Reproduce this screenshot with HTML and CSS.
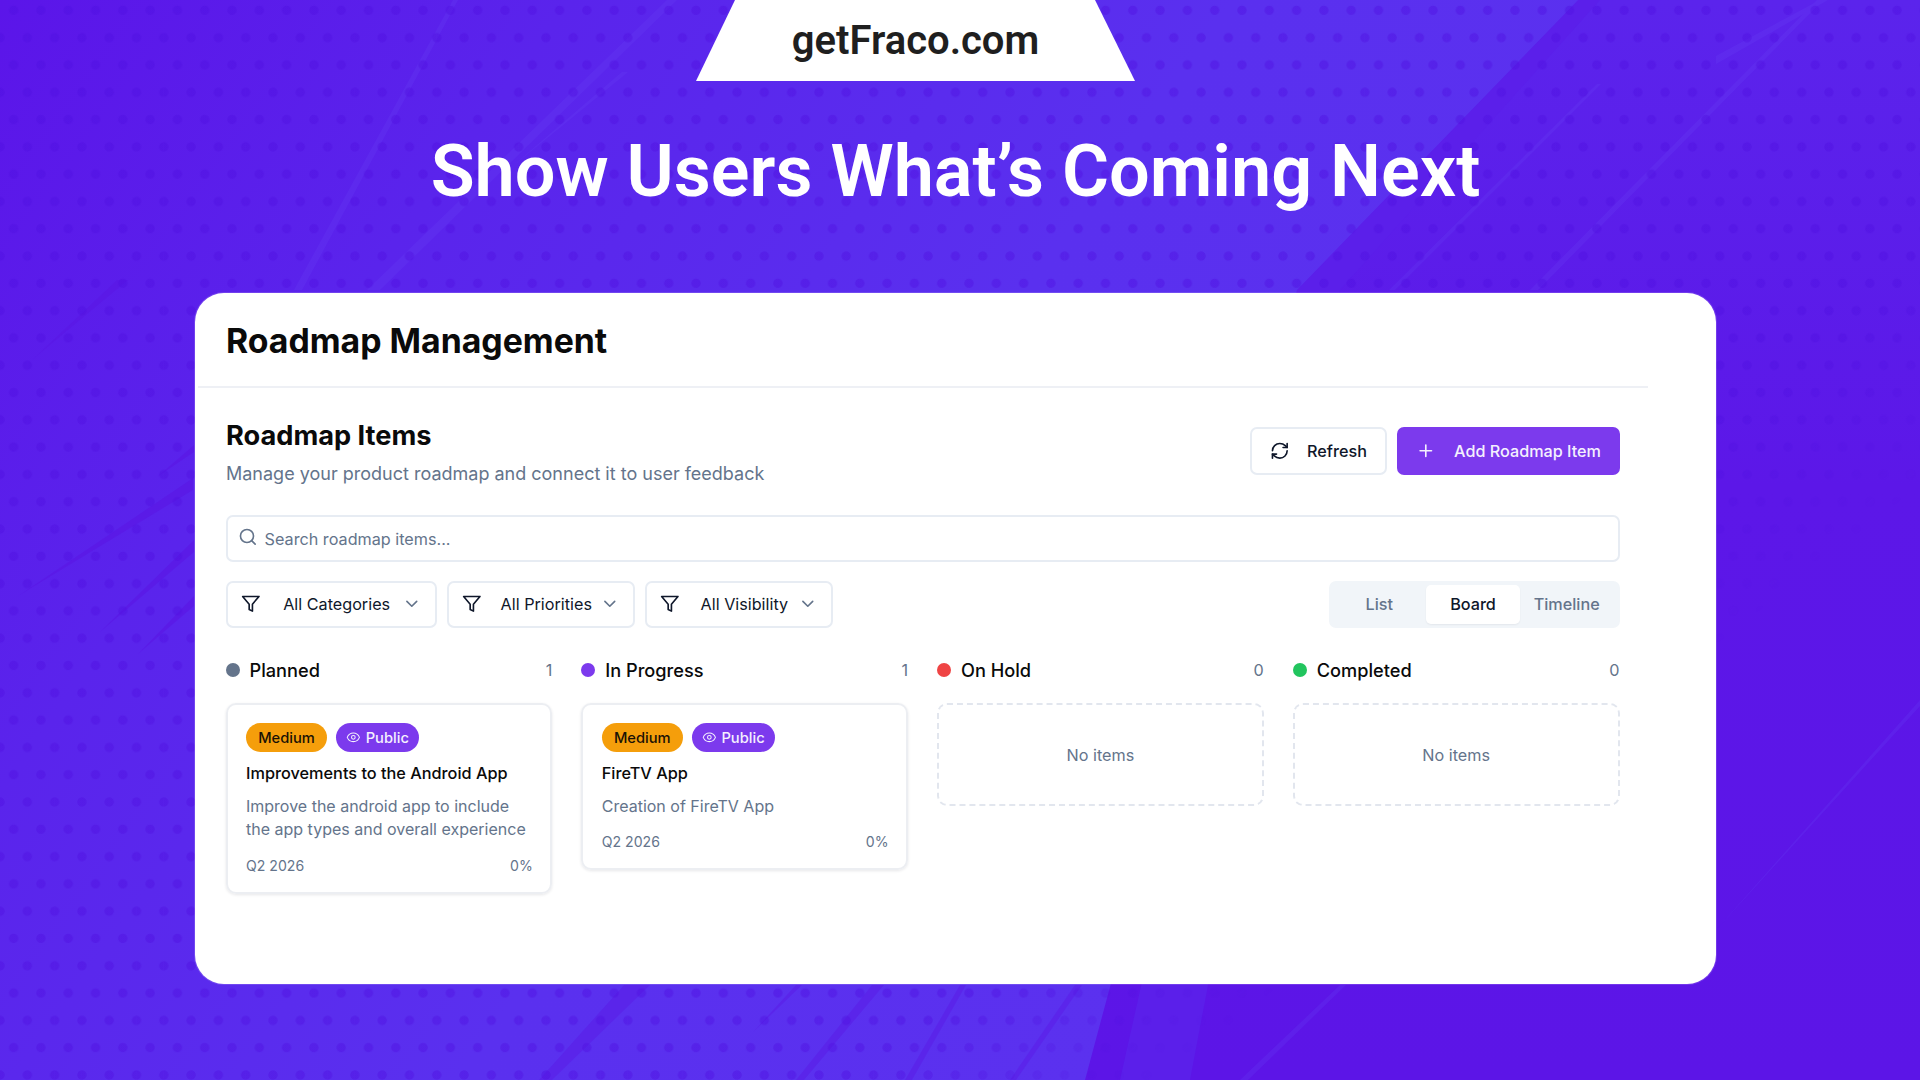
FILE: index.html
```html
<!DOCTYPE html>
<html lang="en">
<head>
    <meta charset="UTF-8">
    <title>Show Users What's Coming Next</title>
    <link rel="stylesheet" href="styles.css">
</head>
<body>
    <svg class="sprite" width="0" height="0">
        <symbol id="i-filter" viewBox="0 0 24 24"><polygon points="22 3 2 3 10 12.46 10 19 14 21 14 12.46 22 3"/></symbol>
        <symbol id="i-chevron" viewBox="0 0 24 24"><path d="m6 9 6 6 6-6"/></symbol>
        <symbol id="i-refresh" viewBox="0 0 24 24"><path d="M3 12a9 9 0 0 1 9-9 9.75 9.75 0 0 1 6.74 2.74L21 8"/><path d="M21 3v5h-5"/><path d="M21 12a9 9 0 0 1-9 9 9.75 9.75 0 0 1-6.74-2.74L3 16"/><path d="M8 16H3v5"/></symbol>
        <symbol id="i-plus" viewBox="0 0 24 24"><path d="M5 12h14"/><path d="M12 5v14"/></symbol>
        <symbol id="i-search" viewBox="0 0 24 24"><circle cx="11" cy="11" r="8"/><path d="m21 21-4.3-4.3"/></symbol>
        <symbol id="i-eye" viewBox="0 0 24 24"><path d="M2 12s3-7 10-7 10 7 10 7-3 7-10 7-10-7-10-7Z"/><circle cx="12" cy="12" r="3"/></symbol>
    </svg>

    <div class="page">
        <!-- Background art: lighter band and brush streaks -->
        <svg class="bg-art" width="1920" height="1080" viewBox="0 0 1920 1080">
            <defs>
                <linearGradient id="bandFill" gradientUnits="userSpaceOnUse" x1="0" y1="0" x2="1250" y2="900">
                    <stop offset="0" stop-color="#5b15e9"/>
                    <stop offset="0.3" stop-color="#5a24ec"/>
                    <stop offset="0.65" stop-color="#5a30ef"/>
                    <stop offset="1" stop-color="#5b31ef"/>
                </linearGradient>
                <linearGradient id="sideFill" x1="0" y1="0" x2="0" y2="1">
                    <stop offset="0" stop-color="#5b24ec"/>
                    <stop offset="0.45" stop-color="#5c17e8"/>
                    <stop offset="1" stop-color="#5c15e7"/>
                </linearGradient>
            </defs>
            <rect width="1920" height="1080" fill="url(#sideFill)"/>
            <polygon points="1578,0 1600,0 1340,290 1190,1080 1120,1080 1297,290" fill="#5b1fea"/>
            <polygon points="0,0 1578,0 1297,290 1085,1080 0,1080" fill="url(#bandFill)"/>
            <g fill="#5a18e6" opacity="0.7">
                <polygon points="18,596 193,478 193,490"/>
                <polygon points="33,359 117,280 128,280"/>
                <polygon points="100,632 194,540 194,552"/>
                <polygon points="138,654 194,596 194,606"/>
                <polygon points="157,477 194,445 194,452"/>
            </g>
            <g fill="#5a18e6" opacity="0.45">
                <polygon points="539,1080 624,985 650,985 552,1080"/>
                <polygon points="796,1080 872,985 884,985 804,1080"/>
                <polygon points="753,1032 796,985 802,985"/>
                <polygon points="905,1080 960,985 966,985 912,1080"/>
                <polygon points="1010,1080 1075,985 1082,985 1016,1080"/>
            </g>
            <g fill="#6a45f5" opacity="0.22">
                <polygon points="294,290 453,0 458,0 302,290"/>
                <polygon points="367,290 667,0 677,0 380,290"/>
                <polygon points="508,170 622,72 628,72"/>
                <polygon points="1389,290 1597,84 1601,84 1395,290"/>
                <polygon points="1530,290 1817,0 1823,0 1538,290"/>
                <polygon points="1716,56 1820,0 1828,0 1716,64"/>
                <polygon points="1716,930 1920,700 1920,706"/>
                <polygon points="1240,1080 1340,985 1346,985 1248,1080"/>
            </g>
        </svg>
        <div class="dots"></div>

        <div class="page-inner">
            <div class="domain-tab">getFraco.com</div>
            <h1 class="headline">Show Users What’s Coming Next</h1>

            <div class="panel">
                <div class="app">
                    <div class="app-header">
                        <h2>Roadmap Management</h2>
                    </div>

                    <div class="content">
                        <!-- Title row -->
                        <div class="title-row">
                            <div>
                                <h3>Roadmap Items</h3>
                                <p class="subtitle">Manage your product roadmap and connect it to user feedback</p>
                            </div>
                            <div class="actions">
                                <button class="btn btn-refresh">
                                    <svg class="icon icon-action"><use href="#i-refresh"/></svg>
                                    Refresh
                                </button>
                                <button class="btn btn-add">
                                    <svg class="icon icon-action"><use href="#i-plus"/></svg>
                                    Add Roadmap Item
                                </button>
                            </div>
                        </div>

                        <!-- Search -->
                        <div class="search">
                            <svg class="icon icon-search"><use href="#i-search"/></svg>
                            <span>Search roadmap items...</span>
                        </div>

                        <!-- Filters -->
                        <div class="filter-row">
                            <div class="filters">
                                <div class="filter filter-categories">
                                    <svg class="icon icon-filter"><use href="#i-filter"/></svg>
                                    <span>All Categories</span>
                                    <svg class="icon icon-chevron"><use href="#i-chevron"/></svg>
                                </div>
                                <div class="filter filter-priorities">
                                    <svg class="icon icon-filter"><use href="#i-filter"/></svg>
                                    <span>All Priorities</span>
                                    <svg class="icon icon-chevron"><use href="#i-chevron"/></svg>
                                </div>
                                <div class="filter filter-visibility">
                                    <svg class="icon icon-filter"><use href="#i-filter"/></svg>
                                    <span>All Visibility</span>
                                    <svg class="icon icon-chevron"><use href="#i-chevron"/></svg>
                                </div>
                            </div>
                            <div class="view-toggle">
                                <div class="view-option">List</div>
                                <div class="view-option active">Board</div>
                                <div class="view-option">Timeline</div>
                            </div>
                        </div>

                        <!-- Board -->
                        <div class="board">
                            <div class="column">
                                <div class="column-header">
                                    <span class="dot dot-planned"></span>
                                    <span class="column-name">Planned</span>
                                    <span class="column-count">1</span>
                                </div>
                                <div class="item">
                                    <div class="badges">
                                        <span class="badge badge-medium">Medium</span>
                                        <span class="badge badge-public"><svg class="icon icon-eye"><use href="#i-eye"/></svg>Public</span>
                                    </div>
                                    <div class="item-title">Improvements to the Android App</div>
                                    <p class="item-desc">Improve the android app to include the app types and overall experience</p>
                                    <div class="item-meta"><span>Q2 2026</span><span>0%</span></div>
                                </div>
                            </div>

                            <div class="column">
                                <div class="column-header">
                                    <span class="dot dot-progress"></span>
                                    <span class="column-name">In Progress</span>
                                    <span class="column-count">1</span>
                                </div>
                                <div class="item">
                                    <div class="badges">
                                        <span class="badge badge-medium">Medium</span>
                                        <span class="badge badge-public"><svg class="icon icon-eye"><use href="#i-eye"/></svg>Public</span>
                                    </div>
                                    <div class="item-title">FireTV App</div>
                                    <p class="item-desc">Creation of FireTV App</p>
                                    <div class="item-meta"><span>Q2 2026</span><span>0%</span></div>
                                </div>
                            </div>

                            <div class="column">
                                <div class="column-header">
                                    <span class="dot dot-hold"></span>
                                    <span class="column-name">On Hold</span>
                                    <span class="column-count">0</span>
                                </div>
                                <div class="empty">No items</div>
                            </div>

                            <div class="column">
                                <div class="column-header">
                                    <span class="dot dot-completed"></span>
                                    <span class="column-name">Completed</span>
                                    <span class="column-count">0</span>
                                </div>
                                <div class="empty">No items</div>
                            </div>
                        </div>
                    </div>
                </div>
            </div>
        </div>
    </div>
</body>
</html>
```

FILE: styles.css
```css
* {
    margin: 0;
    padding: 0;
    box-sizing: border-box;
}

body {
    font-family: Inter, "Liberation Sans", sans-serif;
    color: #0f172a;
    overflow: hidden;
}

.sprite {
    position: absolute;
}

.page {
    position: relative;
    width: 1920px;
    height: 1080px;
    overflow: hidden;
    background-color: #5b21ec;
}

/* Background layers */
.bg-art {
    position: absolute;
    top: 0;
    left: 0;
}

.dots {
    position: absolute;
    inset: 0;
    background-image:
        radial-gradient(circle at 13.6px 10.3px, rgba(80, 16, 225, 0.42) 4.2px, transparent 5px),
        radial-gradient(circle at 0px 37.7px, rgba(80, 16, 225, 0.42) 4.2px, transparent 5px),
        radial-gradient(circle at 27.3px 37.7px, rgba(80, 16, 225, 0.42) 4.2px, transparent 5px);
    background-size: 27.3px 54.6px;
    -webkit-mask-image: linear-gradient(142deg, #000 68%, transparent 77%);
    mask-image: linear-gradient(142deg, #000 68%, transparent 77%);
}

.page-inner {
    position: relative;
}

/* Top banner */
.domain-tab {
    width: 439px;
    height: 81px;
    margin-left: 696px;
    background-color: white;
    clip-path: polygon(39px 0, 399px 0, 100% 100%, 0 100%);
    color: #1f1f1f;
    font-family: Roboto, sans-serif;
    font-size: 40px;
    font-weight: 600;
    line-height: 81px;
    text-align: center;
}

.headline {
    margin-top: 50px;
    margin-left: -9px;
    color: white;
    font-family: Roboto, sans-serif;
    font-size: 72px;
    font-weight: 600;
    line-height: 82px;
    text-align: center;
}

/* White panel */
.panel {
    width: 1521.5px;
    height: 691px;
    margin-top: 80px;
    margin-left: 194.5px;
    padding-left: 3.5px;
    background-color: white;
    border-radius: 29px;
    box-shadow: 0 0 0 1px rgba(255, 255, 255, 0.14);
}

.app {
    width: 1450px;
}

.app-header {
    height: 95px;
    padding: 28px 0 0 28px;
    border-bottom: 2px solid #eef0f5;
}

.app-header h2 {
    font-size: 33.8px;
    font-weight: 700;
    line-height: 40px;
    color: #0a0a0a;
}

.content {
    padding: 0 28.5px 0 28px;
}

/* Title row */
.title-row {
    display: flex;
    justify-content: space-between;
    padding-top: 32px;
    height: 127px;
}

.title-row h3 {
    font-size: 27.2px;
    font-weight: 700;
    line-height: 32px;
    color: #0a0a0a;
}

.subtitle {
    margin-top: 7.5px;
    font-size: 18px;
    line-height: 28px;
    color: #64748b;
}

.actions {
    display: flex;
    gap: 10px;
    margin-top: 7px;
}

.btn {
    display: flex;
    align-items: center;
    height: 48px;
    font-family: inherit;
    font-size: 16.2px;
    font-weight: 500;
    border-radius: 7px;
    border: 2px solid #e7ecf3;
}

.btn-refresh {
    width: 137px;
    gap: 18px;
    padding-left: 17.5px;
    background-color: white;
    color: #0f172a;
}

.btn-add {
    width: 222.5px;
    gap: 19px;
    padding-left: 16.5px;
    background-color: #7c3aed;
    border-color: #7c3aed;
    color: #f4f0fe;
}

/* Icons */
.icon {
    flex: none;
    fill: none;
    stroke: currentColor;
    stroke-width: 2;
    stroke-linecap: round;
    stroke-linejoin: round;
}

.icon-action {
    width: 19.6px;
    height: 19.6px;
}

/* Search */
.search {
    display: flex;
    align-items: center;
    gap: 7px;
    height: 47px;
    padding-left: 10px;
    border: 2px solid #e7ecf3;
    border-radius: 7px;
    font-size: 16.2px;
    color: #64748b;
}

.icon-search {
    width: 19.6px;
    height: 19.6px;
    margin-top: -4px;
}

/* Filters */
.filter-row {
    display: flex;
    justify-content: space-between;
    margin-top: 19px;
}

.filters {
    display: flex;
    gap: 10px;
}

.filter {
    display: flex;
    align-items: center;
    height: 47px;
    padding-left: 13px;
    padding-bottom: 1px;
    border: 2px solid #e7ecf3;
    border-radius: 7px;
    font-size: 16.2px;
    color: #0f172a;
}

.filter-categories { width: 211px; }
.filter-priorities { width: 188px; }
.filter-visibility { width: 188px; }

.icon-filter {
    width: 19.6px;
    height: 19.6px;
    margin-right: 22.6px;
}

.icon-chevron {
    width: 19.6px;
    height: 19.6px;
    margin-left: auto;
    margin-right: 13px;
    color: #64748b;
}

.filter-priorities .icon-filter { margin-right: 19px; }
.filter-visibility .icon-filter { margin-right: 21px; }

.view-toggle {
    display: flex;
    width: 291px;
    height: 47px;
    padding: 4px 6px 4px 4px;
    background-color: #f1f5f9;
    border-radius: 7px;
}

.view-option {
    flex: 1;
    display: flex;
    align-items: center;
    justify-content: center;
    padding-bottom: 1px;
    font-size: 16.2px;
    font-weight: 500;
    color: #64748b;
    border-radius: 5px;
}

.view-option.active {
    background-color: white;
    color: #0f172a;
    box-shadow: 0 1px 2px rgba(15, 23, 42, 0.06);
}

/* Board */
.board {
    display: grid;
    grid-template-columns: repeat(4, 1fr);
    gap: 29px;
    margin-top: 28px;
    margin-left: -0.5px;
}

.column-header {
    display: flex;
    align-items: center;
    gap: 10px;
    height: 28px;
    margin-bottom: 19px;
}

.dot {
    width: 14px;
    height: 14px;
    border-radius: 50%;
}

.dot-planned { background-color: #64748b; }
.dot-progress { background-color: #7c3aed; }
.dot-hold { background-color: #ef4444; }
.dot-completed { background-color: #22c55e; }

.column-name {
    flex: 1;
    font-size: 18.2px;
    font-weight: 500;
    color: #0a0a0a;
}

.column-count {
    font-size: 16.2px;
    color: #64748b;
}

.item {
    padding: 18px 17.5px 15px 18.5px;
    border: 2px solid #eceef2;
    border-radius: 10px;
    box-shadow: 0 1px 3px rgba(15, 23, 42, 0.1);
}

.badges {
    display: flex;
    gap: 9px;
    margin-bottom: 9px;
}

.badge {
    display: flex;
    align-items: center;
    height: 29px;
    padding: 0 12px;
    border-radius: 15px;
    font-size: 14.7px;
    font-weight: 500;
}

.badge-medium {
    width: 81px;
    justify-content: center;
    padding: 0;
    background-color: #f59e0b;
    color: #1a1205;
}

.badge-public {
    gap: 5px;
    padding: 0 10px;
    background-color: #7c3aed;
    color: #f4f0fe;
}

.icon-eye {
    width: 14.7px;
    height: 14.7px;
    stroke-width: 1.7;
}

.item-title {
    font-size: 16.3px;
    font-weight: 500;
    line-height: 24px;
    color: #0a0a0a;
}

.item-desc {
    margin-top: 9.5px;
    font-size: 16px;
    line-height: 23.5px;
    color: #64748b;
}

.item-meta {
    display: flex;
    justify-content: space-between;
    margin-top: 13px;
    font-size: 14.1px;
    line-height: 22px;
    color: #64748b;
}

.empty {
    display: flex;
    align-items: center;
    justify-content: center;
    height: 103px;
    border: 2px dashed #e2e6ee;
    border-radius: 10px;
    font-size: 16.2px;
    color: #64748b;
}
```
